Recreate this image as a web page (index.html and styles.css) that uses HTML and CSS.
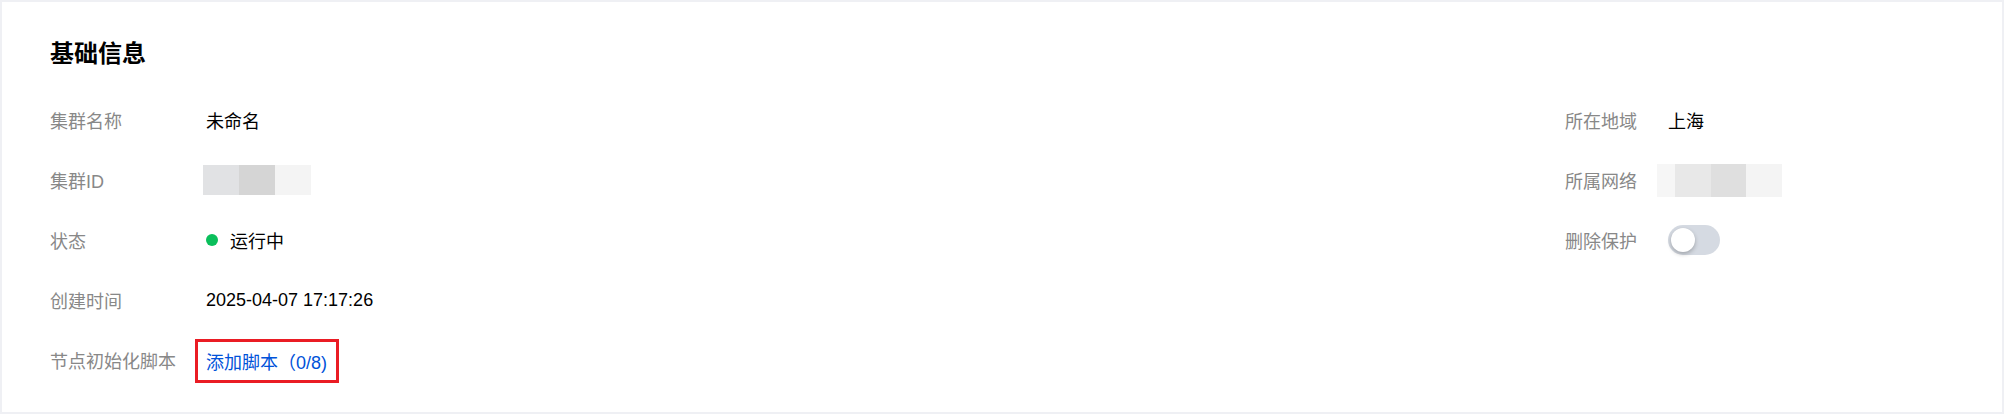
FILE: index.html
```html
<!DOCTYPE html>
<html lang="zh-CN">
<head>
<meta charset="utf-8">
<title>基础信息</title>
<link rel="stylesheet" href="styles.css">
</head>
<body>
<section class="card">
  <h2 class="title">基础信息</h2>
  <div class="grid">
    <div class="col">
      <div class="row"><span class="label">集群名称</span><span class="value">未命名</span></div>
      <div class="row"><span class="label">集群ID</span><span class="value"><span class="mosaic mosaic-a"><i></i><i></i><i></i></span></span></div>
      <div class="row"><span class="label">状态</span><span class="value status"><span class="dot"></span>运行中</span></div>
      <div class="row"><span class="label">创建时间</span><span class="value">2025-04-07 17:17:26</span></div>
      <div class="row"><span class="label">节点初始化脚本</span><span class="value"><span class="highlight"><a class="link" href="#">添加脚本（0/8)</a></span></span></div>
    </div>
    <div class="col col-right">
      <div class="row"><span class="label">所在地域</span><span class="value">上海</span></div>
      <div class="row"><span class="label">所属网络</span><span class="value"><span class="mosaic mosaic-b"><i></i><i></i><i></i><i></i></span></span></div>
      <div class="row"><span class="label">删除保护</span><span class="value"><span class="switch"><span class="knob"></span></span></span></div>
    </div>
  </div>
</section>
</body>
</html>
```
FILE: styles.css
```css
html, body {
  margin: 0;
  padding: 0;
}
body {
  background: #eff0f4;
  font-family: "Liberation Sans", "Noto Sans CJK SC", sans-serif;
  width: 2004px;
  height: 414px;
  overflow: hidden;
}
.card {
  box-sizing: border-box;
  margin: 2px 2px 0 2px;
  width: 2000px;
  height: 410px;
  background: #ffffff;
  padding: 36px 37px 0 48px;
}
.title {
  margin: 0 0 20px 0;
  font-size: 24px;
  line-height: 32px;
  font-weight: bold;
  color: #000000;
}
.grid {
  display: grid;
  grid-template-columns: 1fr 400px;
}
.col {
  display: flex;
  flex-direction: column;
}
.row {
  display: flex;
  align-items: center;
  height: 60px;
  font-size: 18px;
}
.label {
  width: 156px;
  flex: none;
  color: #888888;
}
.col-right .label {
  width: 103px;
}
.value {
  color: #000000;
  display: flex;
  align-items: center;
}
.mosaic {
  display: flex;
  height: 30px;
}
.mosaic i {
  display: block;
  width: 36px;
  height: 100%;
}
.mosaic-a {
  margin-left: -3px;
}
.mosaic-a i:nth-child(1) { background: #e1e2e4; }
.mosaic-a i:nth-child(2) { background: #d5d5d5; }
.mosaic-a i:nth-child(3) { background: #f4f4f4; }
.mosaic-b {
  margin-left: -11px;
  height: 33px;
}
.mosaic-b i:nth-child(1) { background: #f6f6f6; width: 18px; }
.mosaic-b i:nth-child(2) { background: #e8e8e8; }
.mosaic-b i:nth-child(3) { background: #dfdfdf; width: 35px; }
.mosaic-b i:nth-child(4) { background: #f4f4f4; }
.dot {
  width: 12px;
  height: 12px;
  border-radius: 50%;
  background: #0abf5b;
  margin-right: 12px;
}
.highlight {
  display: inline-flex;
  align-items: center;
  height: 38px;
  border: 3px solid #ea1c24;
  padding: 0 9px 0 8px;
  margin-left: -11px;
  margin-top: 2px;
}
.link {
  color: #0052d9;
  text-decoration: none;
}
.switch {
  position: relative;
  display: block;
  width: 52px;
  height: 30px;
  border-radius: 15px;
  background: #d5dae2;
}
.knob {
  position: absolute;
  left: 3px;
  top: 3px;
  width: 24px;
  height: 24px;
  border-radius: 50%;
  background: #ffffff;
  box-shadow: 0 2px 4px rgba(0, 0, 0, 0.25);
}
```
